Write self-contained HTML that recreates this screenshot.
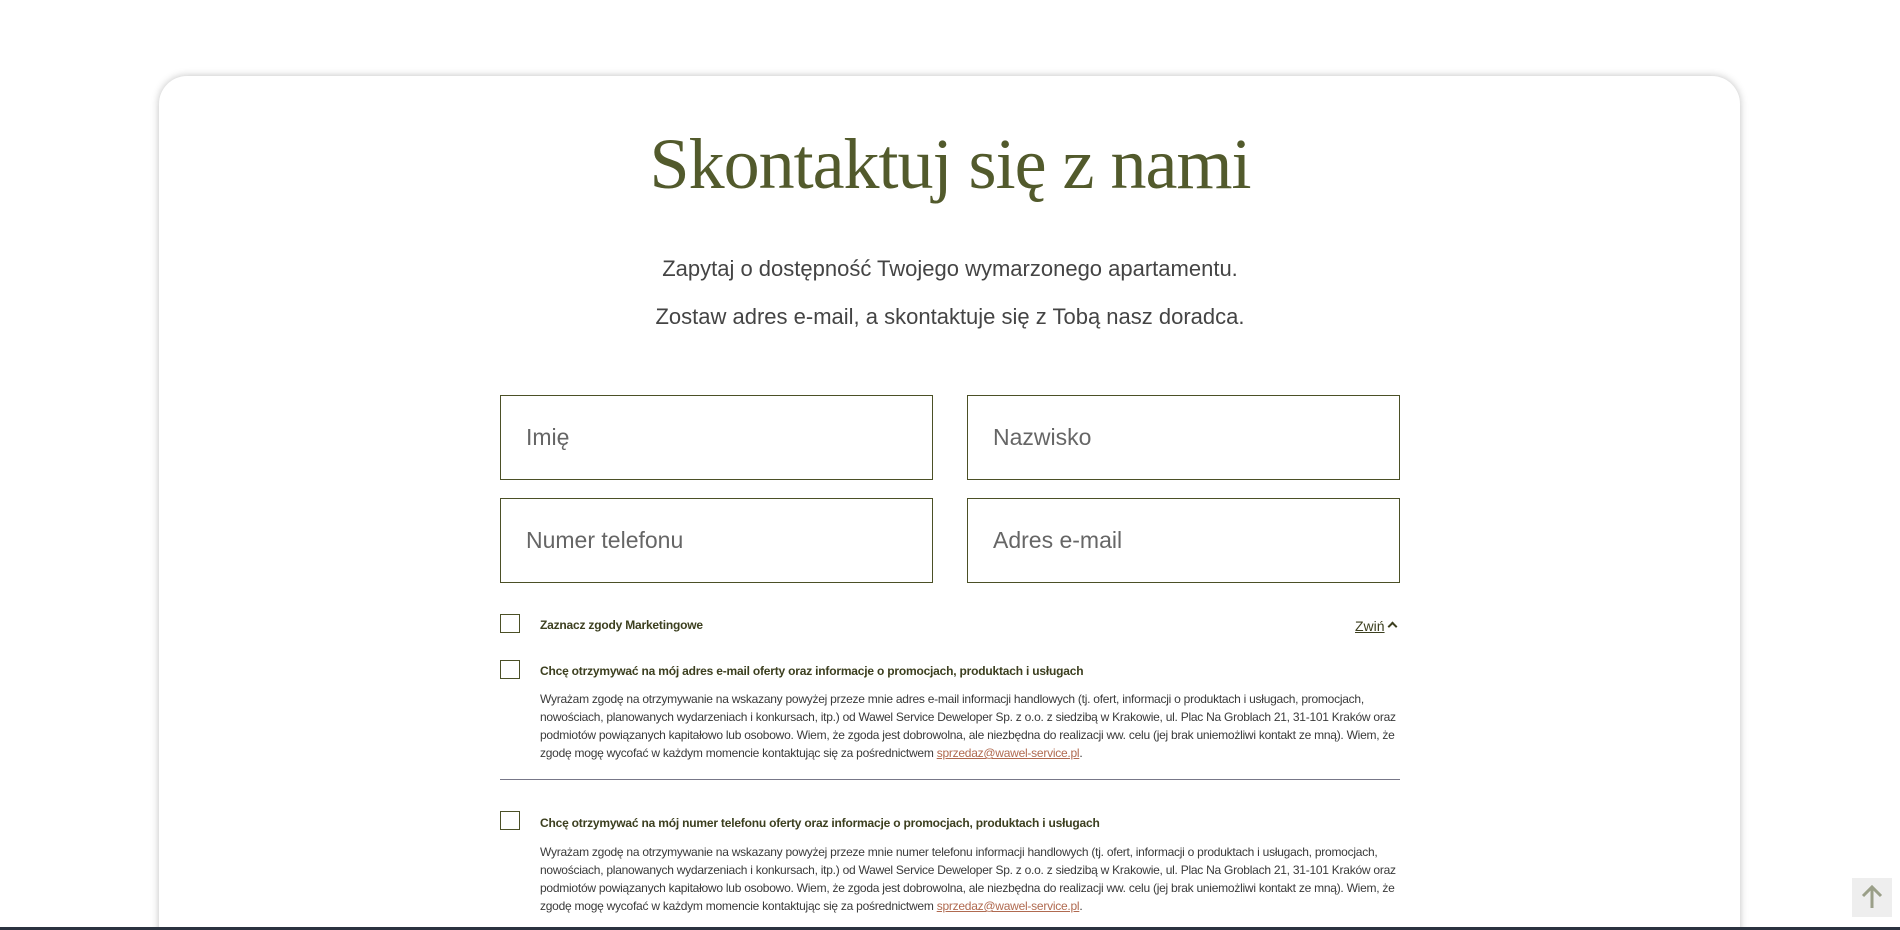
<!DOCTYPE html>
<html style="overflow:hidden;width:1900px;height:930px"><head><meta charset="utf-8"><style>
*{margin:0;padding:0;box-sizing:border-box}
body{width:1900px;height:930px;background:#fff;overflow:hidden;position:relative;font-family:"Liberation Sans",sans-serif}
.card{position:absolute;left:159px;top:76px;width:1581px;height:900px;background:#fff;border-radius:28px;box-shadow:0 0 8px rgba(0,0,0,.25)}
h1{position:absolute;left:0;width:1900px;top:123px;text-align:center;font-family:"Liberation Serif",serif;font-weight:400;font-size:72px;color:#525a2c;letter-spacing:-1px}
.sub{position:absolute;left:0;width:1900px;text-align:center;font-size:22px;color:#444}
.in{position:absolute;width:433px;height:85px;border:1px solid #4b5026;font-size:23px;color:#666;padding-left:25px;line-height:83px}
.cb{position:absolute;left:500px;width:20px;height:19px;border:1.5px solid #4b5026}
.lab{position:absolute;left:540px;font-size:12px;font-weight:bold;color:#3c3f1f;letter-spacing:-0.2px}
.p{position:absolute;left:540px;width:870px;font-size:12px;line-height:18px;color:#3a3a3a;letter-spacing:-0.25px}
.p a{color:#b06a50;text-decoration:underline}
.hr{position:absolute;left:500px;width:900px;top:779px;height:1px;background:#778}
</style></head><body>
<div class="card"></div>
<h1>Skontaktuj się z nami</h1>
<div class="sub" style="top:256px">Zapytaj o dostępność Twojego wymarzonego apartamentu.</div>
<div class="sub" style="top:304px">Zostaw adres e-mail, a skontaktuje się z Tobą nasz doradca.</div>
<div class="in" style="left:500px;top:395px">Imię</div>
<div class="in" style="left:967px;top:395px">Nazwisko</div>
<div class="in" style="left:500px;top:498px">Numer telefonu</div>
<div class="in" style="left:967px;top:498px">Adres e-mail</div>
<div class="cb" style="top:614px"></div>
<div class="lab" style="top:618px">Zaznacz zgody Marketingowe</div>
<div style="position:absolute;left:1355px;top:618px;font-size:14px;color:#3c3f1f;text-decoration:underline">Zwiń</div>
<div style="position:absolute;left:1389px;top:623px;width:7px;height:7px;border-left:2px solid #3c3f1f;border-top:2px solid #3c3f1f;transform:rotate(45deg)"></div>
<div class="cb" style="top:660px"></div>
<div class="lab" style="top:664px">Chcę otrzymywać na mój adres e-mail oferty oraz informacje o promocjach, produktach i usługach</div>
<div class="p" style="top:690px">Wyrażam zgodę na otrzymywanie na wskazany powyżej przeze mnie adres e-mail informacji handlowych (tj. ofert, informacji o produktach i usługach, promocjach, nowościach, planowanych wydarzeniach i konkursach, itp.) od Wawel Service Deweloper Sp. z o.o. z siedzibą w Krakowie, ul. Plac Na Groblach 21, 31-101 Kraków oraz podmiotów powiązanych kapitałowo lub osobowo. Wiem, że zgoda jest dobrowolna, ale niezbędna do realizacji ww. celu (jej brak uniemożliwi kontakt ze mną). Wiem, że zgodę mogę wycofać w każdym momencie kontaktując się za pośrednictwem <a>sprzedaz@wawel-service.pl</a>.</div>
<div class="hr"></div>
<div class="cb" style="top:811px"></div>
<div class="lab" style="top:816px">Chcę otrzymywać na mój numer telefonu oferty oraz informacje o promocjach, produktach i usługach</div>
<div class="p" style="top:843px">Wyrażam zgodę na otrzymywanie na wskazany powyżej przeze mnie numer telefonu informacji handlowych (tj. ofert, informacji o produktach i usługach, promocjach, nowościach, planowanych wydarzeniach i konkursach, itp.) od Wawel Service Deweloper Sp. z o.o. z siedzibą w Krakowie, ul. Plac Na Groblach 21, 31-101 Kraków oraz podmiotów powiązanych kapitałowo lub osobowo. Wiem, że zgoda jest dobrowolna, ale niezbędna do realizacji ww. celu (jej brak uniemożliwi kontakt ze mną). Wiem, że zgodę mogę wycofać w każdym momencie kontaktując się za pośrednictwem <a>sprzedaz@wawel-service.pl</a>.</div>
<div style="position:absolute;left:1852px;top:878px;width:40px;height:39px;background:#eee">
<svg width="40" height="39" viewBox="0 0 40 39"><path d="M20 30V10M11 18l9-9 9 9" stroke="#9a9f88" stroke-width="3" fill="none"/></svg></div>
<div style="position:absolute;left:0;top:927px;width:1900px;height:3px;background:#2b3340"></div>
</body></html>
